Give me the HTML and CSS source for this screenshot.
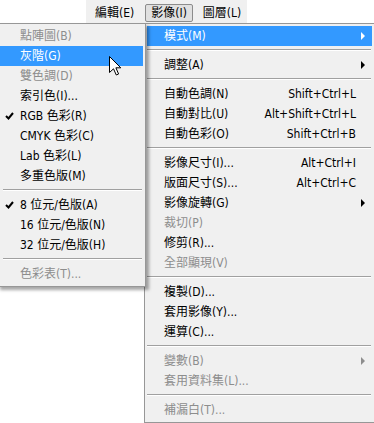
FILE: index.html
```html
<!DOCTYPE html>
<html lang="zh-Hant">
<head>
    <meta charset="UTF-8">
    <title>影像選單</title>
    <link rel="stylesheet" href="styles.css">
</head>
<body>
    <div class="menubar">
        <div class="menubar-items">
            <span class="bar-item">編輯(E)</span>
            <span class="bar-item active">影像(I)</span>
            <span class="bar-item">圖層(L)</span>
        </div>
    </div>

    <!-- main Image menu -->
    <div class="menu image-menu">
        <div class="item hover"><span class="label">模式(M)</span><span class="end"><i class="arrow"></i></span></div>
        <div class="sep"></div>
        <div class="item"><span class="label">調整(A)</span><span class="end"><i class="arrow"></i></span></div>
        <div class="sep"></div>
        <div class="item"><span class="label">自動色調(N)</span><span class="key">Shift+Ctrl+L</span><span class="end"></span></div>
        <div class="item"><span class="label">自動對比(U)</span><span class="key">Alt+Shift+Ctrl+L</span><span class="end"></span></div>
        <div class="item"><span class="label">自動色彩(O)</span><span class="key">Shift+Ctrl+B</span><span class="end"></span></div>
        <div class="sep"></div>
        <div class="item"><span class="label">影像尺寸(I)...</span><span class="key">Alt+Ctrl+I</span><span class="end"></span></div>
        <div class="item"><span class="label">版面尺寸(S)...</span><span class="key">Alt+Ctrl+C</span><span class="end"></span></div>
        <div class="item"><span class="label">影像旋轉(G)</span><span class="end"><i class="arrow"></i></span></div>
        <div class="item off"><span class="label">裁切(P)</span><span class="end"></span></div>
        <div class="item"><span class="label">修剪(R)...</span><span class="end"></span></div>
        <div class="item off"><span class="label">全部顯現(V)</span><span class="end"></span></div>
        <div class="sep"></div>
        <div class="item"><span class="label">複製(D)...</span><span class="end"></span></div>
        <div class="item"><span class="label">套用影像(Y)...</span><span class="end"></span></div>
        <div class="item"><span class="label">運算(C)...</span><span class="end"></span></div>
        <div class="sep"></div>
        <div class="item off"><span class="label">變數(B)</span><span class="end"><i class="arrow"></i></span></div>
        <div class="item off"><span class="label">套用資料集(L)...</span><span class="end"></span></div>
        <div class="sep"></div>
        <div class="item off"><span class="label">補漏白(T)...</span><span class="end"></span></div>
    </div>

    <!-- Mode submenu -->
    <div class="menu mode-menu">
        <div class="item off">點陣圖(B)</div>
        <div class="item hover">灰階(G)</div>
        <div class="item off">雙色調(D)</div>
        <div class="item">索引色(I)...</div>
        <div class="item"><svg class="check" width="9" height="8" viewBox="0 0 9 8"><path d="M1 4 L3.5 6.5 L8 1" fill="none" stroke="#000" stroke-width="2"/></svg>RGB 色彩(R)</div>
        <div class="item">CMYK 色彩(C)</div>
        <div class="item">Lab 色彩(L)</div>
        <div class="item">多重色版(M)</div>
        <div class="sep"></div>
        <div class="item"><svg class="check" width="9" height="8" viewBox="0 0 9 8"><path d="M1 4 L3.5 6.5 L8 1" fill="none" stroke="#000" stroke-width="2"/></svg>8 位元/色版(A)</div>
        <div class="item">16 位元/色版(N)</div>
        <div class="item">32 位元/色版(H)</div>
        <div class="sep"></div>
        <div class="item off">色彩表(T)...</div>
    </div>

    <svg class="cursor" width="13" height="20" viewBox="0 0 13 20">
        <path d="M0.5 0.5 L0.5 16.5 L4.5 12.8 L7.3 19 L9.6 18 L6.9 11.8 L11.8 11.8 Z" fill="#fff" stroke="#000" stroke-width="1" stroke-linejoin="miter"/>
    </svg>
</body>
</html>
```

FILE: styles.css
```css
body {
    margin: 0;
    width: 374px;
    height: 423px;
    overflow: hidden;
    position: relative;
    background-color: #fff;
    color: #000;
    font-family: "DejaVu Sans Condensed", "Noto Sans CJK TC", sans-serif;
    font-size: 12px;
}

.menubar {
    height: 23px;
    padding-left: 86px;
}

.menubar-items {
    display: flex;
    align-items: flex-start;
    box-sizing: border-box;
    width: 161px;
    height: 23px;
    padding: 4px 0 0 9px;
    background-color: #f0f0f0;
}

.bar-item {
    flex-shrink: 0;
    white-space: nowrap;
    line-height: 16px;
    padding: 1px 0;
    margin-right: 10px;
}

.bar-item:first-child {
    margin-right: 11px;
}

.bar-item.active {
    padding: 0 5px;
    border: 1px solid #8c8c8c;
    border-radius: 2px;
    background-color: #e0e0e0;
}

/* dropdowns lie over the page */
.menu {
    position: absolute;
    top: 23px;
    padding: 2px;
    border: 1px solid #979797;
    background-color: #f0f0f0;
    line-height: 20px;
}

.image-menu {
    left: 144px;
    width: 225px;
    z-index: 1;
}

.mode-menu {
    left: -3px;
    width: 143px;
    z-index: 2;
    box-shadow: 3px 3px 3px rgba(0, 0, 0, 0.35);
}

.item {
    position: relative;
    display: flex;
    align-items: center;
    height: 20px;
    padding-left: 17px;
    white-space: nowrap;
}

.mode-menu .item {
    padding-left: 20px;
}

.item.hover {
    background-color: #3399ff;
    color: #fff;
}

.item.off {
    color: #8d8d8d;
}

.label {
    flex: 1;
}

.end {
    position: relative;
    flex-shrink: 0;
    width: 16px;
    height: 20px;
}

.arrow {
    position: absolute;
    left: 5px;
    top: 6px;
    border-left: 4px solid #000;
    border-top: 4px solid transparent;
    border-bottom: 4px solid transparent;
}

.hover .arrow {
    border-left-color: #fff;
}

.off .arrow {
    border-left-color: #8d8d8d;
}

.sep {
    height: 1px;
    margin: 3px 1px 4px 0;
    background-color: #a0a0a0;
    border-bottom: 1px solid #fff;
}

.mode-menu .sep {
    margin-left: 3px;
}

.check {
    position: absolute;
    left: 5px;
    top: 6px;
}

.cursor {
    position: absolute;
    left: 109px;
    top: 56px;
    z-index: 3;
}
```
